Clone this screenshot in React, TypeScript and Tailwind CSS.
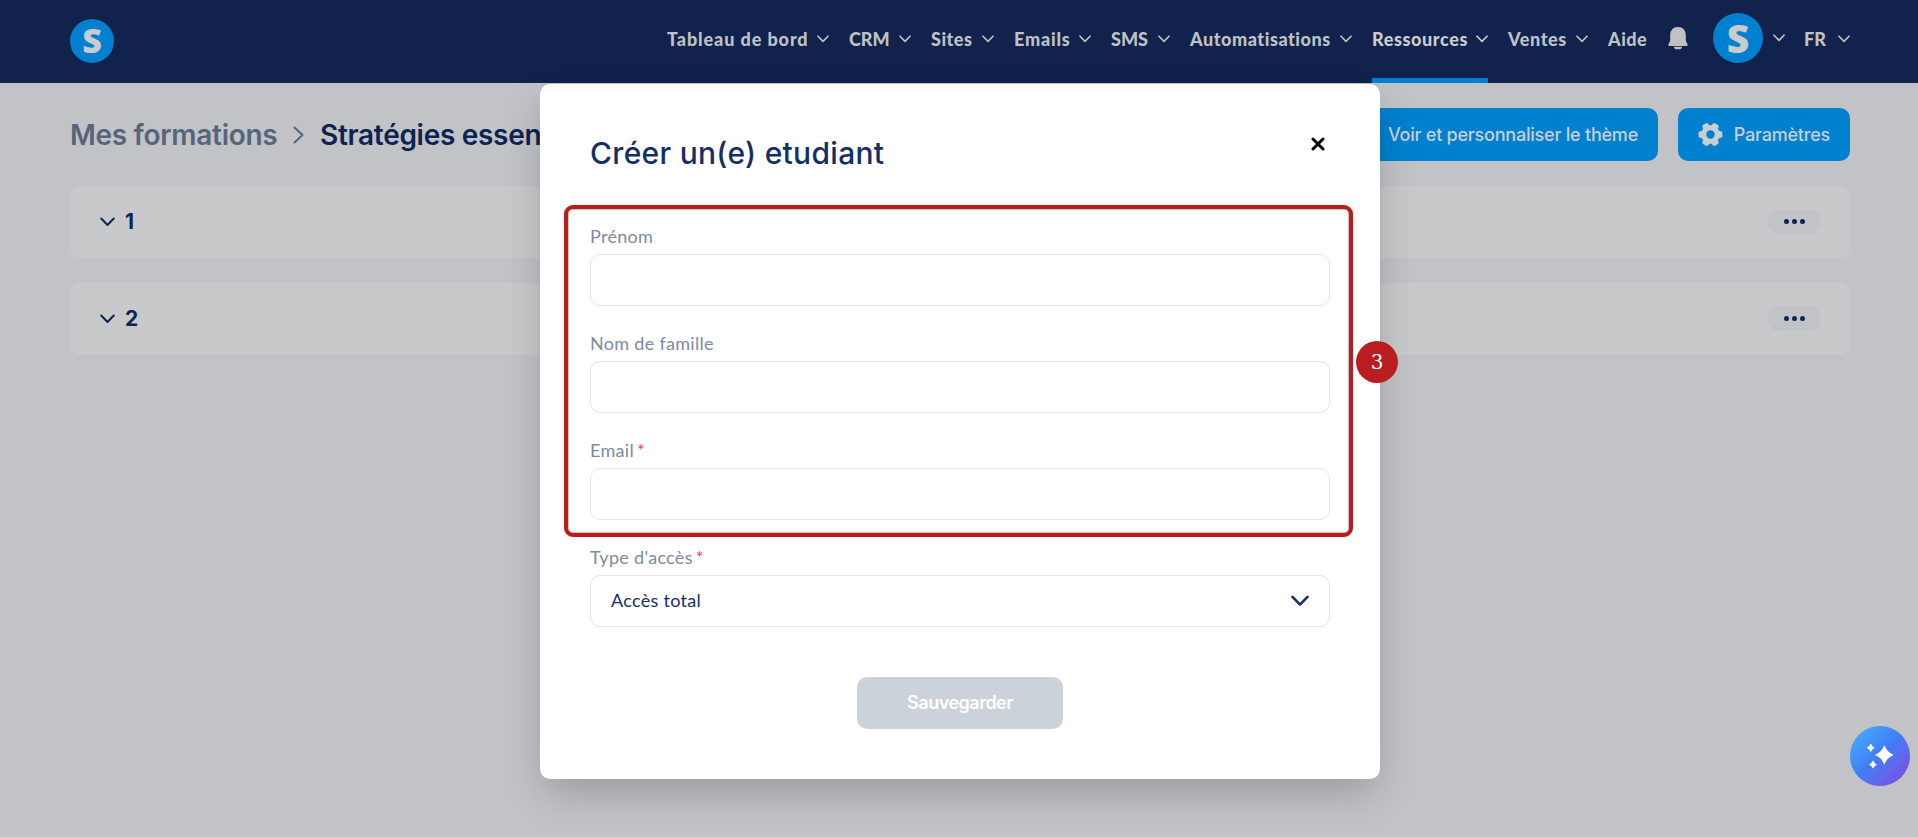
import React, { useState } from 'react';

const NAV_ITEMS = [
  { label: 'Tableau de bord', width: 'w-[162px]', text: 'tracking-[0.9px]' },
  { label: 'CRM', width: 'w-[62px]', text: '' },
  { label: 'Sites', width: 'w-[63px]', text: 'tracking-[0.5px]' },
  { label: 'Emails', width: 'w-[77px]', text: 'tracking-[0.8px]' },
  { label: 'SMS', width: 'w-[59px]', text: '' },
  { label: 'Automatisations', width: 'w-[162px]', text: 'tracking-[0.55px]' },
  { label: 'Ressources', width: 'w-[116px]', text: 'tracking-[0.6px]', active: true },
  { label: 'Ventes', width: 'w-[80px]', text: 'tracking-[0.6px]' },
];

const FIELDS = [
  { id: 'firstName', label: 'Prénom', required: false },
  { id: 'lastName', label: 'Nom de famille', required: false },
  { id: 'email', label: 'Email', required: true },
];

const Chevron: React.FC<{ className?: string; strokeWidth?: number }> = ({ className, strokeWidth = 1.6 }) => (
  <svg viewBox="0 0 12 8" fill="none" stroke="currentColor" strokeWidth={strokeWidth} strokeLinecap="round" strokeLinejoin="round" className={className}>
    <path d="M1 1.2L6 6.4L11 1.2" />
  </svg>
);

const Logo: React.FC<{ className: string }> = ({ className }) => (
  <div className={`flex shrink-0 items-center justify-center rounded-full bg-[#0081cf] pb-[2px] font-['Open_Sans',sans-serif] leading-none font-extrabold text-[#cacbcc] ${className}`}>
    S
  </div>
);

const Header: React.FC = () => (
  <header className="flex h-[83px] justify-between bg-[#11234d] pr-[68px] pl-[70px]">
    <Logo className="mt-[19px] size-11 text-[34px]" />
    <nav className="flex h-full font-['Lato',sans-serif] text-[18px] leading-none font-black text-[#bfc1c4]">
      <div className="flex gap-5">
        {NAV_ITEMS.map(item => (
          <a
            key={item.label}
            className={`flex h-full items-center justify-between border-b-[5px] whitespace-nowrap ${item.width} ${item.active ? 'border-[#0081cf] text-[#cbccce]' : 'border-transparent'}`}
          >
            <span className={item.text}>{item.label}</span>
            <Chevron className="w-3 shrink-0" />
          </a>
        ))}
      </div>
      <a className="ml-5 flex h-[78px] w-[39px] items-center tracking-[0.5px]">Aide</a>
      <div className="ml-[21px] flex h-[76px] items-center">
        <svg viewBox="0 0 20 23" className="w-5" fill="#bfc1c4">
          <path d="M10 0C5.2 0 2.2 3.4 2.2 8v5.5c0 1.5-1.9 2.8-1.9 4.3 0 .7.5 1.2 1.2 1.2h17c.7 0 1.2-.5 1.2-1.2 0-1.5-1.9-2.8-1.9-4.3V8C17.8 3.4 14.8 0 10 0z" />
          <path d="M6 19.800h8c0 1.600-.9 2.400-2.100 2.400H8.100c-1.200 0-2.100-.8-2.100-2.400z" />
        </svg>
      </div>
      <div className="ml-[25px] flex h-[76px] items-center gap-[10px]">
        <Logo className="size-[50px] text-[39px]" />
        <Chevron className="w-3" />
      </div>
      <div className="ml-[19px] flex h-[78px] w-[46px] items-center justify-between">
        FR
        <Chevron className="w-3" />
      </div>
    </nav>
  </header>
);

const GearIcon: React.FC = () => (
  <svg viewBox="0 0 26 26" className="w-[25px]" fill="none" stroke="currentColor">
    <circle cx="13" cy="13" r="7" strokeWidth="5.2" />
    <g strokeWidth="3.2" strokeLinejoin="round" fill="currentColor">
      {[0, 60, 120, 180, 240, 300].map(angle => (
        <path key={angle} d="M2.200 11.300L5 10.500V15.500L2.200 14.700Z" transform={`rotate(${angle} 13 13)`} />
      ))}
    </g>
  </svg>
);

const PageContent: React.FC = () => (
  <main className="pt-[25px] pr-[68px] pl-[70px] font-['Inter',sans-serif]">
    <div className="flex h-[53px] items-center justify-between">
      <div className="flex items-center text-[28px] leading-none font-semibold tracking-[-0.3px] whitespace-nowrap">
        <span className="w-[207px] text-[#56657a]">Mes formations</span>
        <svg viewBox="0 0 11 18" className="mx-4 w-[11px]" fill="none" stroke="#56657a" strokeWidth="2" strokeLinecap="round" strokeLinejoin="round">
          <path d="M1.500 1.500L9.500 9L1.500 16.500" />
        </svg>
        <span className="text-[#0d2352]">Stratégies essen</span>
      </div>
      <div className="flex gap-5 text-[18px] font-medium tracking-[-0.22px] text-[#c9ced3]">
        <button className="h-[53px] w-[340px] rounded-[10px] bg-[#0081cf] pr-5 text-right">Voir et personnaliser le thème</button>
        <button className="flex h-[53px] w-[172px] items-center justify-between rounded-[10px] bg-[#0081cf] px-5">
          <GearIcon />
          Paramètres
        </button>
      </div>
    </div>
    <div className="mt-[25px] flex flex-col gap-[25px]">
      {['1', '2'].map(name => (
        <div key={name} className="flex h-[72px] items-center justify-between rounded-[10px] bg-[#c8c9ca] pr-[30px] pb-px pl-[30px] text-[#0f2453]">
          <div className="flex items-center gap-[10px] text-[21px] font-bold">
            <Chevron className="w-[15px]" />
            {name}
          </div>
          <button className="flex h-[25px] w-[52px] items-center justify-center gap-[3px] rounded-[10px] bg-[#c2c3c7]">
            <span className="size-[5px] rounded-full bg-[#0f2453]" />
            <span className="size-[5px] rounded-full bg-[#0f2453]" />
            <span className="size-[5px] rounded-full bg-[#0f2453]" />
          </button>
        </div>
      ))}
    </div>
  </main>
);

const FieldLabel: React.FC<{ htmlFor: string; label: string; required?: boolean }> = ({ htmlFor, label, required }) => (
  <label htmlFor={htmlFor} className="mb-[7px] flex h-[21px] items-center gap-[3px] text-[18px] leading-[21px] tracking-[0.3px] text-[#7b8ba3]">
    {label}
    {required && <span className="text-[#ff3366]">*</span>}
  </label>
);

const StudentModal: React.FC = () => {
  const [values, setValues] = useState<Record<string, string>>({});

  return (
    <div className="absolute top-[84px] left-[540px] h-[695px] w-[840px] rounded-[10px] bg-white px-[50px] pt-[51px] font-['Lato',sans-serif] shadow-[0_16px_40px_-4px_rgba(0,0,0,0.22)]">
      <div className="flex h-[90px] items-start justify-between">
        <h2 className="font-['Inter',sans-serif] text-[30px] leading-9 font-medium tracking-[0.3px] text-[#142f66]">Créer un(e) etudiant</h2>
        <button className="mt-[2px] mr-[5px]">
          <svg viewBox="0 0 14 14" className="w-[14px]" stroke="#000" strokeWidth="3" strokeLinecap="round">
            <path d="M2 2L12 12M12 2L2 12" />
          </svg>
        </button>
      </div>

      <div className="flex flex-col gap-[27px] pt-px">
        {FIELDS.map(f => (
          <div key={f.id}>
            <FieldLabel htmlFor={f.id} label={f.label} required={f.required} />
            <input
              id={f.id}
              type="text"
              className="block h-[52px] w-full rounded-[10px] border border-[#e2e4e7] px-5 text-[18px] text-[#142f66] outline-none"
              value={values[f.id] || ''}
              onChange={(e) => setValues({ ...values, [f.id]: e.target.value })}
            />
          </div>
        ))}
        <div>
          <FieldLabel htmlFor="access" label="Type d'accès" required />
          <button id="access" className="flex h-[52px] w-full items-center justify-between rounded-[10px] border border-[#e2e4e7] px-5 pb-px text-[18px] tracking-[0.3px] text-[#142f66]">
            Accès total
            <Chevron className="w-[18px]" strokeWidth={1.7} />
          </button>
        </div>
      </div>

      <div className="mt-[50px] flex justify-center">
        <button className="h-[52px] w-[206px] rounded-[10px] bg-[#cbd2d9] pb-px font-['Inter',sans-serif] text-[18px] font-semibold tracking-[-0.5px] text-white">Sauvegarder</button>
      </div>

      {/* Guide step: highlighted area and its number */}
      <div className="pointer-events-none absolute top-[121px] left-[24px] h-[332px] w-[789px] rounded-[9px] border-4 border-[#b91d1f] shadow-[0_0_1px_rgba(90,90,90,0.6),inset_0_0_1px_1px_rgba(90,90,90,0.4)]" />
      <div className="absolute top-[257px] left-[816px] flex size-[42px] items-center justify-center rounded-full bg-[#b91d1f] font-['DejaVu_Serif',serif] text-[20px] leading-none text-white">3</div>
    </div>
  );
};

const App: React.FC = () => (
  <div className="relative h-[837px] w-full overflow-hidden bg-[#c2c3c7]">
    <Header />
    <PageContent />
    <StudentModal />
    <button className="absolute top-[726px] left-[1850px] flex size-[60px] items-center justify-center rounded-full bg-linear-to-br from-[#49b3f8] via-[#417bf8] to-[#7d42d8]">
      <svg viewBox="0 0 60 60" className="size-[60px]" fill="#fff">
        <path d="M34.300 19.300Q37 26.300 43.600 29Q37 31.700 34.300 38.700Q31.600 31.700 25 29Q31.600 26.300 34.300 19.300z" />
        <path d="M20.700 17.500Q21.900 20.500 24.700 21.700Q21.900 22.900 20.700 26Q19.500 22.900 16.700 21.700Q19.500 20.500 20.700 17.500z" />
        <path d="M23 34.200Q24.200 37.200 27 38.400Q24.200 39.600 23 42.600Q21.800 39.600 19 38.400Q21.800 37.200 23 34.200z" />
      </svg>
    </button>
  </div>
);

export default App;
